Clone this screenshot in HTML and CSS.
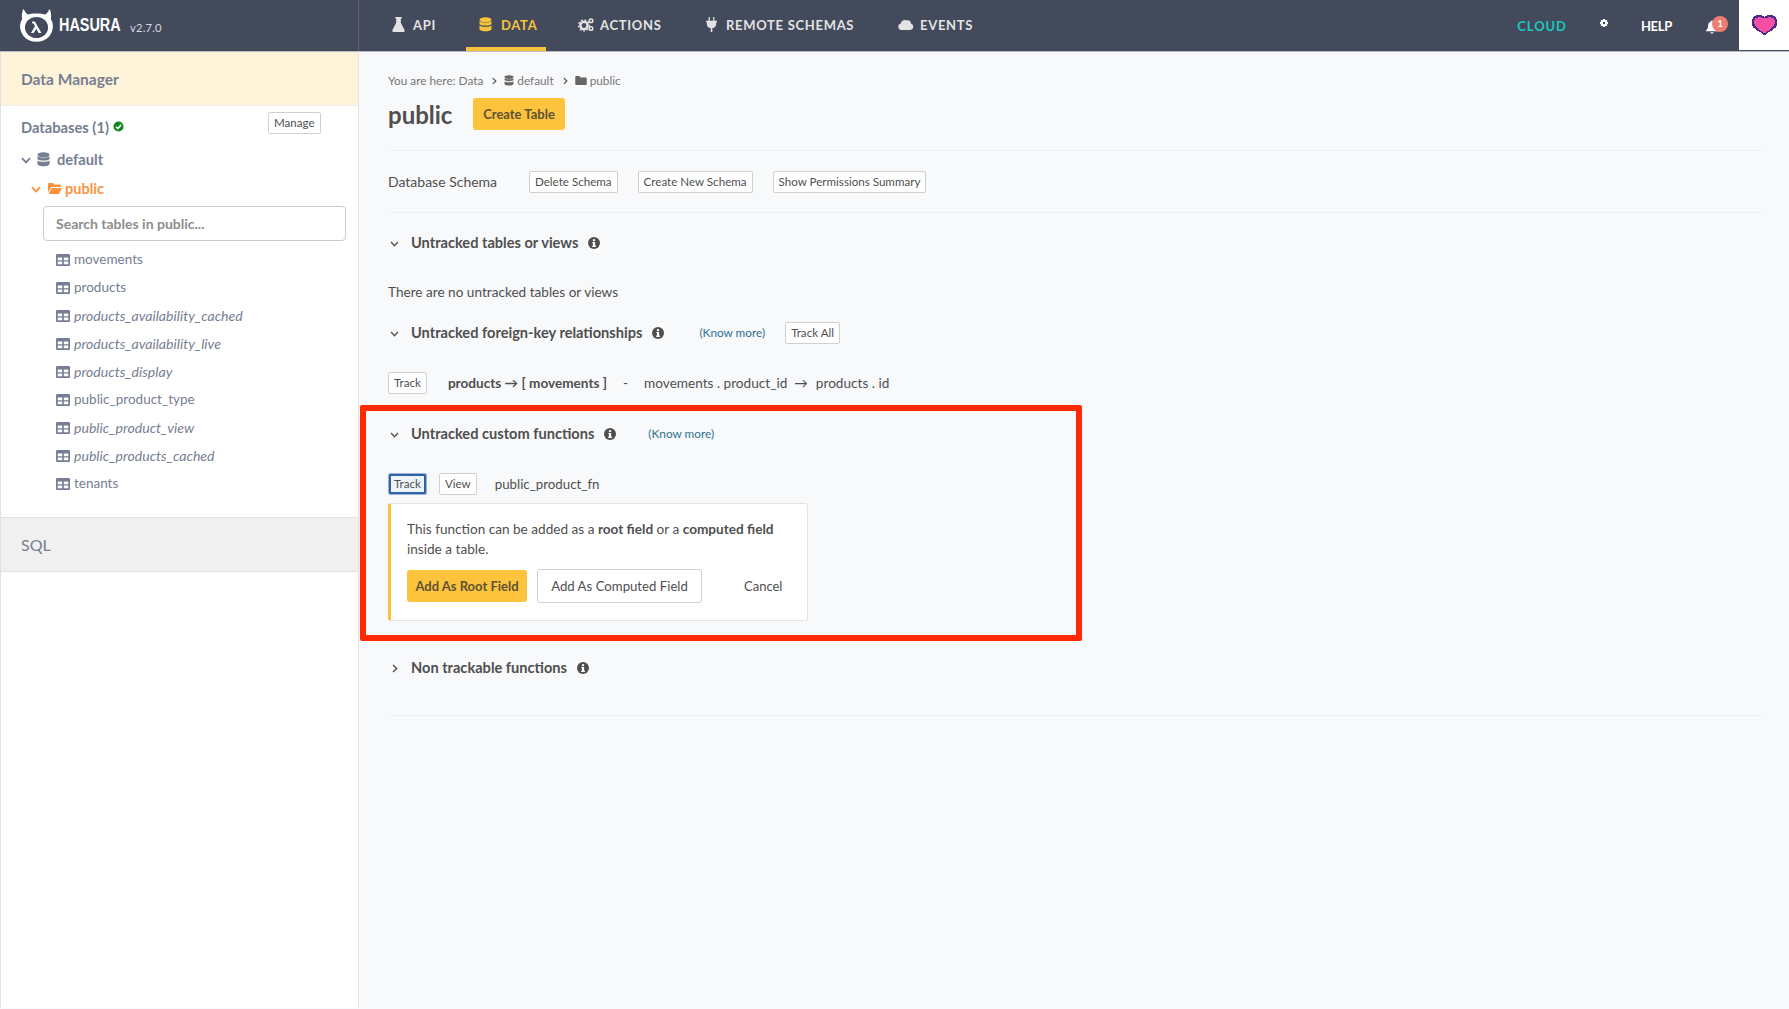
FILE: index.html
```html
<!DOCTYPE html>
<html lang="en">
<head>
<meta charset="utf-8">
<title>Hasura - Data</title>
<link rel="stylesheet" href="styles.css">
</head>
<body>
<svg class="defs" width="0" height="0" aria-hidden="true">
  <symbol id="db" viewBox="0 0 14 16"><ellipse cx="7" cy="3" rx="6.5" ry="2.7" fill="currentColor"/><path d="M.5 4.6C2 6.6 12 6.6 13.5 4.6V7.4C12 9.6 2 9.6.5 7.4ZM.5 9C2 11 12 11 13.5 9V13C12 16 2 16 .5 13Z" fill="currentColor"/></symbol>
  <symbol id="table" viewBox="0 0 14 12"><path fill-rule="evenodd" d="M1.2 0H12.8A1.2 1.2 0 0 1 14 1.2V10.8A1.2 1.2 0 0 1 12.8 12H1.2A1.2 1.2 0 0 1 0 10.8V1.2A1.2 1.2 0 0 1 1.2 0ZM1.7 3.6V6.2H6.2V3.6ZM7.8 3.6V6.2H12.3V3.6ZM1.7 7.6V10.3H6.2V7.6ZM7.8 7.6V10.3H12.3V7.6Z" fill="currentColor"/></symbol>
  <symbol id="info" viewBox="0 0 12 12"><circle cx="6" cy="6" r="6" fill="currentColor"/><rect x="4.9" y="2.2" width="2.2" height="1.9" fill="#fff"/><path d="M4.4 5H7.1V8.6H7.9V9.9H4.2V8.6H5V6.3H4.4Z" fill="#fff"/></symbol>
  <symbol id="down" viewBox="0 0 10 7"><path d="M1 1.2 5 5.4 9 1.2" fill="none" stroke="currentColor" stroke-width="1.7"/></symbol>
  <symbol id="right" viewBox="0 0 7 10"><path d="M1.2 1 5.4 5 1.2 9" fill="none" stroke="currentColor" stroke-width="1.7"/></symbol>
  <symbol id="folder" viewBox="0 0 14 11"><path d="M0 1A1 1 0 0 1 1 0H5L6.4 1.6H12A1 1 0 0 1 13 2.6V4H3.2L0 9.6ZM3.6 5H14L11 11H.6Z" fill="currentColor"/></symbol>
  <symbol id="folder-solid" viewBox="0 0 14 11"><path d="M0 1.2A1.2 1.2 0 0 1 1.2 0H5L6.5 1.7H12.8A1.2 1.2 0 0 1 14 2.9V9.8A1.2 1.2 0 0 1 12.8 11H1.2A1.2 1.2 0 0 1 0 9.8Z" fill="currentColor"/></symbol>
</svg>

<header class="topbar">
  <div class="brand">
    <svg class="logo" viewBox="0 0 30 34" preserveAspectRatio="none" aria-hidden="true"><path d="M3 0C5 3 6 5 7 5.5 10 4 20 4 23 5.5 24 5 25.500 3 27 0 28.500 4 28.500 7 28 10 31 15 30.500 22 26.500 27.500 21 34.500 9 34.500 3.500 27.500-.5 22-1 15 2 10 1.500 7 1.500 4 3 0Z" fill="#fff"/><circle cx="15" cy="18.500" r="10.500" fill="#434a5c"/><path d="M11 12.500H13.500L19.500 24H17L14.800 19.800 12.500 24H10L13.600 17.300 12.500 14.500H11Z" fill="#fff"/></svg>
    <span class="wordmark">HASURA</span>
    <span class="version">v2.7.0</span>
  </div>
  <nav class="nav">
    <a class="nav-item nav-api"><svg class="nav-icon" viewBox="0 0 14 16"><path d="M3.500 0H10.500V1.500H9.500V6L13.500 14A1.300 1.300 0 0 1 12.300 16H1.700A1.300 1.300 0 0 1 .5 14L4.500 6V1.500H3.500Z" fill="currentColor"/></svg>API</a>
    <a class="nav-item nav-data active"><svg class="nav-icon"><use href="#db"/></svg>DATA</a>
    <a class="nav-item nav-actions"><svg class="nav-icon wide" viewBox="0 0 16 14"><circle cx="6" cy="8" r="3.600" fill="none" stroke="currentColor" stroke-width="2.400"/><circle cx="6" cy="8" r="5.400" fill="none" stroke="currentColor" stroke-width="1.300" stroke-dasharray="2 1.600"/><circle cx="13" cy="3.300" r="1.800" fill="none" stroke="currentColor" stroke-width="1.500"/><circle cx="13" cy="11" r="1.800" fill="none" stroke="currentColor" stroke-width="1.500"/></svg>ACTIONS</a>
    <a class="nav-item nav-remote"><svg class="nav-icon" viewBox="0 0 14 18"><path d="M3.500 0H5V4.500H9V0H10.500V4.500H13.500V6.500H12.500V9C12.500 11.500 10.500 13 8 13.300V18H6V13.300C3.500 13 1.500 11.500 1.500 9V6.500H.5V4.500H3.500Z" fill="currentColor"/></svg>REMOTE SCHEMAS</a>
    <a class="nav-item nav-events"><svg class="nav-icon wide" viewBox="0 0 16 11"><path d="M3.500 11A3.300 3.300 0 0 1 2.800 4.500 4 4 0 0 1 8.500 1.300 3.500 3.500 0 0 1 13 4.600 3.300 3.300 0 0 1 12.500 11Z" fill="currentColor"/></svg>EVENTS</a>
  </nav>
  <div class="top-right">
    <span class="cloud">CLOUD</span>
    <svg class="gear" viewBox="0 0 10 10"><path fill-rule="evenodd" d="M3.800 0H6.200L6.500 1.500 7.900 .8 9.200 2.100 8.500 3.500 10 3.800V6.200L8.500 6.500 9.200 7.900 7.900 9.200 6.500 8.500 6.200 10H3.800L3.500 8.500 2.100 9.200 .8 7.900 1.500 6.500 0 6.200V3.800L1.500 3.500 .8 2.100 2.100 .8 3.500 1.500ZM5 3.500A1.500 1.500 0 1 0 5 6.500 1.500 1.500 0 1 0 5 3.500Z" fill="#fff"/></svg>
    <span class="help">HELP</span>
    <span class="bell">
      <svg class="bell-icon" viewBox="0 0 14 15"><path d="M7 0A1.300 1.300 0 0 1 8.200 1.200C10.500 1.800 11.500 3.500 11.500 6 11.500 9 12.500 10 14 11.500V12.500H0V11.500C1.500 10 2.500 9 2.500 6 2.500 3.500 3.500 1.800 5.800 1.200A1.300 1.300 0 0 1 7 0ZM5 13.500H9A2 1.500 0 0 1 5 13.500Z" fill="#fff"/></svg>
      <span class="badge">1</span>
    </span>
    <span class="heart-box">
      <svg class="heart" viewBox="0 0 24 22" preserveAspectRatio="none" shape-rendering="crispEdges"><path d="M5 1H9V2H11V3H13V2H15V1H19V2H21V3H22V5H23V11H22V13H21V14H20V15H19V16H18V17H17V18H15V19H14V20H13V21H11V20H10V19H9V18H7V17H6V16H5V15H4V14H3V13H2V11H1V5H2V3H3V2H5Z" fill="#f34fa5" stroke="#4b2a86" stroke-width="1.500"/></svg>
    </span>
  </div>
</header>

<div class="shell">
  <aside class="sidebar">
    <div class="manager-band">Data Manager</div>
    <div class="db-head">
      <span class="db-title">Databases (1)</span>
      <svg class="check" viewBox="0 0 12 12"><circle cx="6" cy="6" r="5.500" fill="#0b8a1e"/><path d="M3.200 6.200 5.200 8.200 8.900 4.200" fill="none" stroke="#fff" stroke-width="1.700"/></svg>
      <button class="btn manage">Manage</button>
    </div>
    <div class="tree-row db-row">
      <svg class="chev"><use href="#down"/></svg>
      <svg class="db-icon"><use href="#db"/></svg>
      <span>default</span>
    </div>
    <div class="tree-row schema-row">
      <svg class="chev"><use href="#down"/></svg>
      <svg class="folder-icon"><use href="#folder"/></svg>
      <span>public</span>
    </div>
    <div class="search">Search tables in public...</div>
    <ul class="tables">
      <li><svg class="t-icon"><use href="#table"/></svg>movements</li>
      <li><svg class="t-icon"><use href="#table"/></svg>products</li>
      <li class="view"><svg class="t-icon"><use href="#table"/></svg>products_availability_cached</li>
      <li class="view"><svg class="t-icon"><use href="#table"/></svg>products_availability_live</li>
      <li class="view"><svg class="t-icon"><use href="#table"/></svg>products_display</li>
      <li><svg class="t-icon"><use href="#table"/></svg>public_product_type</li>
      <li class="view"><svg class="t-icon"><use href="#table"/></svg>public_product_view</li>
      <li class="view"><svg class="t-icon"><use href="#table"/></svg>public_products_cached</li>
      <li><svg class="t-icon"><use href="#table"/></svg>tenants</li>
    </ul>
    <div class="sql-band">SQL</div>
  </aside>

  <main class="main">
    <div class="crumbs">
      <span>You are here: Data</span>
      <svg class="crumb-sep"><use href="#right"/></svg>
      <svg class="crumb-icon"><use href="#db"/></svg>
      <span>default</span>
      <svg class="crumb-sep"><use href="#right"/></svg>
      <svg class="crumb-folder"><use href="#folder-solid"/></svg>
      <span>public</span>
    </div>
    <div class="title-row">
      <h1>public</h1>
      <button class="btn-primary create">Create Table</button>
    </div>
    <div class="schema-bar">
      <span class="schema-label">Database Schema</span>
      <button class="btn">Delete Schema</button>
      <button class="btn">Create New Schema</button>
      <button class="btn">Show Permissions Summary</button>
    </div>

    <div class="section-head s-tables">
      <svg class="sec-chev"><use href="#down"/></svg>
      <h2>Untracked tables or views</h2>
      <svg class="info"><use href="#info"/></svg>
    </div>
    <p class="empty">There are no untracked tables or views</p>

    <div class="section-head s-fk">
      <svg class="sec-chev"><use href="#down"/></svg>
      <h2>Untracked foreign-key relationships</h2>
      <svg class="info"><use href="#info"/></svg>
      <a class="know">(Know more)</a>
      <button class="btn track-all">Track All</button>
    </div>
    <div class="fk-row">
      <button class="btn">Track</button>
      <b class="fk-name">products → [ movements ]</b>
      <span class="fk-dash">-</span>
      <span class="fk-map">movements . product_id</span>
      <span class="fk-arrow">→</span>
      <span>products . id</span>
    </div>

    <div class="section-head s-fn">
      <svg class="sec-chev"><use href="#down"/></svg>
      <h2>Untracked custom functions</h2>
      <svg class="info"><use href="#info"/></svg>
      <a class="know">(Know more)</a>
    </div>
    <div class="fn-row">
      <button class="btn btn-focus">Track</button>
      <button class="btn">View</button>
      <span class="fn-name">public_product_fn</span>
    </div>
    <div class="fn-card">
      <p>This function can be added as a <b>root field</b> or a <b>computed field</b> inside a table.</p>
      <div class="fn-actions">
        <button class="btn-primary root">Add As Root Field</button>
        <button class="btn computed">Add As Computed Field</button>
        <span class="cancel">Cancel</span>
      </div>
    </div>

    <div class="section-head s-non">
      <svg class="sec-chev right"><use href="#right"/></svg>
      <h2>Non trackable functions</h2>
      <svg class="info"><use href="#info"/></svg>
    </div>
    <div class="end-rule"></div>
  </main>
</div>
<div class="highlight"></div>
</body>
</html>
```
FILE: styles.css
```css
* { box-sizing: border-box; }
html, body { margin: 0; height: 100%; }
body {
  font-family: "Lato", "Noto Sans", sans-serif;
  font-size: 13.6px;
  color: #4f4f4f;
  background: #f8f9fb;
  overflow: hidden;
  position: relative;
}
.defs { position: absolute; }
p, h1, h2, ul { margin: 0; padding: 0; }
button { font-family: inherit; cursor: pointer; }

.topbar {
  height: 52px;
  background: #434a5c;
  display: flex;
  border-bottom: 1px solid #b8bcc6;
  color: #fff;
}
.brand {
  width: 359px;
  flex: none;
  display: flex;
  align-items: center;
  padding-left: 20px;
  border-right: 1px solid #5e6475;
}
.logo { width: 33px; height: 34px; }
.wordmark { font-family: "Liberation Sans", sans-serif; font-weight: 700; font-size: 18px; margin-left: 6px; transform: scaleX(.8); transform-origin: left; width: 71px; }
.version { font-size: 11.200px; color: #d8dae0; letter-spacing: .2px; margin-top: 4px; }

.nav { display: flex; font-weight: 700; font-size: 13px; letter-spacing: .7px; color: #e3e3e3; }
.nav-item { display: flex; align-items: center; height: 51px; border-bottom: 4px solid transparent; padding: 2px 0 0 13px; white-space: nowrap; flex: none; }
.nav-api { margin-left: 16px; width: 91px; padding-left: 17px; }
.nav-api .nav-icon { margin-right: 8px; }
.nav-data { width: 80px; }
.nav-actions { margin-left: 19px; width: 127px; }
.nav-remote { width: 193px; }
.nav-events { width: 100px; }
.nav-item.active { color: #f8c33a; border-bottom-color: #f8c33a; }
.nav-icon { width: 13px; height: 15px; margin-right: 9px; flex: none; }
.nav-remote .nav-icon { margin-right: 8px; }
.nav-icon.wide { width: 16px; margin-right: 6px; }

.top-right { margin-left: auto; display: flex; align-items: center; height: 100%; font-weight: 700; }
.cloud { color: #1cc8bb; letter-spacing: .9px; font-size: 13px; }
.gear { width: 8px; height: 8px; margin: -6px 0 0 33px; }
.help { margin-left: 33px; font-size: 13px; letter-spacing: -.3px; }
.bell { display: flex; margin-left: 34px; position: relative; width: 22px; }
.bell-icon { width: 12px; height: 14px; margin-top: 3px; }
.badge { position: absolute; left: 6px; top: -1px; width: 16px; height: 16px; border-radius: 50%; background: #ef7e72; font-size: 9px; text-align: center; line-height: 16px; }
.heart-box { width: 50px; height: 50px; background: #fff; margin-left: 11px; display: flex; align-items: center; justify-content: center; align-self: flex-start; }
.heart { width: 25px; height: 20px; }

.shell { display: flex; height: 956px; }
.sidebar { width: 359px; flex: none; background: #fff; border-right: 1px solid #e6e6e6; border-left: 1px solid #e2e2e2; }
.manager-band { height: 54px; background: #fff4d9; border-bottom: 1px solid #ececec; padding: 0 0 0 20px; display: flex; align-items: center; font-size: 15.500px; font-weight: 700; color: #767e93; }
.db-head { height: 39px; display: flex; align-items: center; padding: 2px 0 0 20px; position: relative; }
.db-title { font-size: 14.700px; font-weight: 700; color: #767e93; }
.check { width: 11px; height: 11px; margin-left: 4px; }
.manage { position: absolute; left: 267px; top: 6px; }
.tree-row { display: flex; align-items: center; font-weight: 700; font-size: 14.700px; }
.db-row { height: 28px; padding-left: 20px; color: #767e93; }
.db-row .chev { width: 10px; height: 7px; margin-top: 2px; }
.db-icon { width: 13px; height: 15px; margin-left: 6px; margin-right: 7px; color: #767e93; }
.schema-row { height: 30px; padding-left: 30px; color: #f9933e; font-size: 14.500px; }
.schema-row .chev { width: 10px; height: 7px; margin-top: 2px; }
.folder-icon { width: 14px; height: 11px; margin: 0 3px 0 7px; }
.search { margin: 3px 0 0 42px; width: 303px; height: 35px; border: 1px solid #ccc; border-radius: 4px; background: #fff; color: #8d8d8d; font-weight: 700; line-height: 33px; padding-left: 12px; font-size: 14px; }
.tables { list-style: none; padding: 4px 0 0 55px; height: 276px; }
.tables li { height: 28px; display: flex; align-items: center; color: #767e93; font-size: 13.500px; }
.tables .view { font-style: italic; font-size: 14.100px; }
.t-icon { width: 14px; height: 12px; margin-right: 4px; flex: none; margin-top: 2px; }
.sql-band { height: 55px; background: #f0f0f0; border-top: 1px solid #e0e0e0; border-bottom: 1px solid #e0e0e0; display: flex; align-items: center; padding-left: 20px; font-size: 16px; color: #767e93; }

.main { flex: 1; padding: 0 26px 0 29px; }
.crumbs { display: flex; align-items: center; height: 56px; font-size: 11.800px; color: #767676; }
.crumb-sep { width: 5px; height: 8px; margin: 1px 7px 0 9px; color: #555; }
.crumb-icon { width: 10px; height: 11px; margin-right: 3px; color: #666; }
.crumb-folder { width: 12px; height: 9px; margin-right: 3px; color: #666; }
.title-row { display: flex; align-items: center; height: 56px; margin-top: -13px; padding-bottom: 17px; border-bottom: 1px solid #eef0f2; }
h1 { font-size: 24px; font-weight: 700; color: #4f4f4f; width: 85px; }
.btn { height: 22px; padding: 0 5px; border: 1px solid #d0d0d0; border-radius: 2px; background: #fff; color: #4f4f4f; font-size: 11.600px; line-height: 18px; }
.btn-primary { border: 0; background: #fdc33c; color: #5f5134; font-weight: 700; border-radius: 3px; font-size: 13px; }
.create { width: 92px; height: 32px; }
.schema-bar { display: flex; align-items: center; height: 62px; border-bottom: 1px solid #eef0f2; }
.schema-label { width: 141px; font-size: 14px; }
.schema-bar .btn { margin-right: 20px; }
.section-head { display: flex; align-items: center; height: 22px; }
.section-head h2 { font-size: 14.600px; font-weight: 700; margin-left: 12px; color: #4f4f4f; }
.sec-chev { width: 9px; height: 6px; margin-left: 2px; margin-top: 3px; color: #555; }
.sec-chev.right { width: 6px; height: 9px; margin-left: 4px; margin-right: 1px; }
.info { width: 12px; height: 12px; margin-left: 10px; margin-top: 1px; color: #4f4f4f; }
.know { color: #2f7291; font-size: 11.800px; margin-left: 32px; }
.s-fk .know { margin-left: 35px; }
.s-tables { margin-top: 18px; }
.empty { margin-top: 31px; line-height: 16px; }
.s-fk { margin-top: 21px; }
.track-all { margin: 2px 0 0 20px; }
.fk-row { display: flex; align-items: center; margin-top: 29px; height: 22px; }
.fk-name { margin-left: 21px; }
.fk-dash { margin-left: 16px; }
.fk-map { margin-left: 16px; }
.fk-arrow { margin: 0 8px 0 7px; }
.s-fn { margin-top: 28px; }
.fn-row { display: flex; align-items: center; margin-top: 29px; height: 22px; }
.fn-row .btn { margin-right: 12px; }
.btn-focus { background: #eef3fa; border-color: #9fb0c8; box-shadow: inset 0 0 0 2px #2d63ad; }
.fn-name { margin-left: 6px; font-size: 13.300px; }
.fn-card { width: 420px; height: 118px; margin-top: 8px; background: #fff; border: 1px solid #e2e2e2; border-left: 3px solid #f8c33a; border-radius: 3px; padding: 15px 16px 0 16px; line-height: 20px; font-size: 13.600px; }
.fn-actions { display: flex; align-items: center; margin-top: 10px; }
.root { width: 120px; height: 32px; }
.computed { height: 34px; width: 165px; margin-left: 10px; border-radius: 3px; font-size: 13.200px; padding: 0; }
.cancel { margin-left: 42px; font-size: 13px; }
.s-non { margin-top: 35px; }
.end-rule { margin-top: 37px; border-top: 1px solid #eef0f2; }

.highlight { position: absolute; left: 360px; top: 405px; width: 722px; height: 236px; border: 6px solid #ff2a00; border-radius: 2px; pointer-events: none; }
```
